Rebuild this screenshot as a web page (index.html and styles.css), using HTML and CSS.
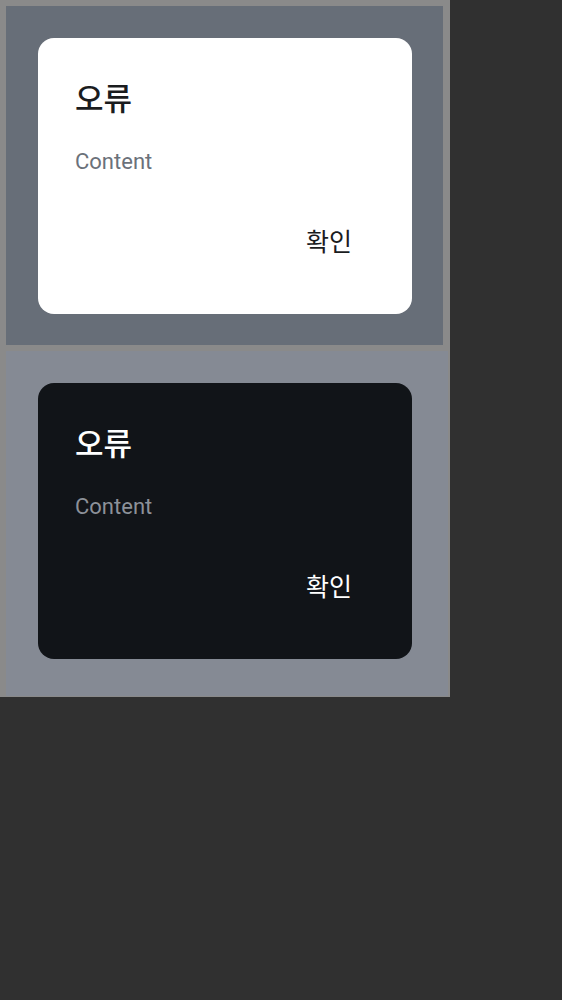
FILE: index.html
```html
<!DOCTYPE html>
<html lang="ko">
<head>
    <meta charset="UTF-8">
    <meta name="viewport" content="width=device-width, initial-scale=1.0">
    <title>Dialog Preview</title>
    <link rel="stylesheet" href="styles.css">
</head>
<body>
    <div class="preview">
        <div class="panel panel-light">
            <div class="dialog">
                <h2 class="dialog-title">오류</h2>
                <p class="dialog-content">Content</p>
                <div class="dialog-actions">
                    <button class="dialog-btn">확인</button>
                </div>
            </div>
        </div>

        <div class="panel panel-dark">
            <div class="dialog dialog-dark">
                <h2 class="dialog-title">오류</h2>
                <p class="dialog-content">Content</p>
                <div class="dialog-actions">
                    <button class="dialog-btn">확인</button>
                </div>
            </div>
        </div>
    </div>
</body>
</html>
```

FILE: styles.css
```css
body {
    margin: 0;
    background: #303030;
    font-family: Roboto, "Noto Sans CJK KR", sans-serif;
}
.preview {
    width: 450px;
    height: 697px;
    background: #8a8a8a;
    box-sizing: border-box;
    padding-top: 6px;
}
.panel {
    box-sizing: border-box;
    padding: 32px;
}
.panel-light {
    margin: 0 7px 6px 6px;
    height: 339px;
    background: #676e78;
}
.panel-dark {
    margin: 0 2px 0 6px;
    height: 345px;
    background: #858a94;
}
.dialog {
    width: 374px;
    height: 276px;
    box-sizing: border-box;
    padding: 35px 37px 0 37px;
    background: #ffffff;
    border-radius: 16px;
    color: #1a1c1e;
}
.dialog-title {
    margin: 0;
    font-size: 31px;
    font-weight: 500;
    line-height: 48px;
    font-family: "Noto Sans CJK KR", sans-serif;
}
.dialog-content {
    margin: 26px 0 0 0;
    font-size: 22px;
    line-height: 30px;
    color: #6b717a;
}
.dialog-actions {
    display: flex;
    justify-content: flex-end;
    margin-top: 45px;
}
.dialog-btn {
    margin-right: 23px;
    padding: 0;
    border: none;
    background: none;
    color: inherit;
    font-family: "Noto Sans CJK KR", sans-serif;
    font-size: 25px;
    font-weight: 400;
    line-height: 36px;
    cursor: pointer;
}
.dialog-dark {
    background: #111418;
    color: #ffffff;
}
.dialog-dark .dialog-content {
    color: #8c9199;
}
```
